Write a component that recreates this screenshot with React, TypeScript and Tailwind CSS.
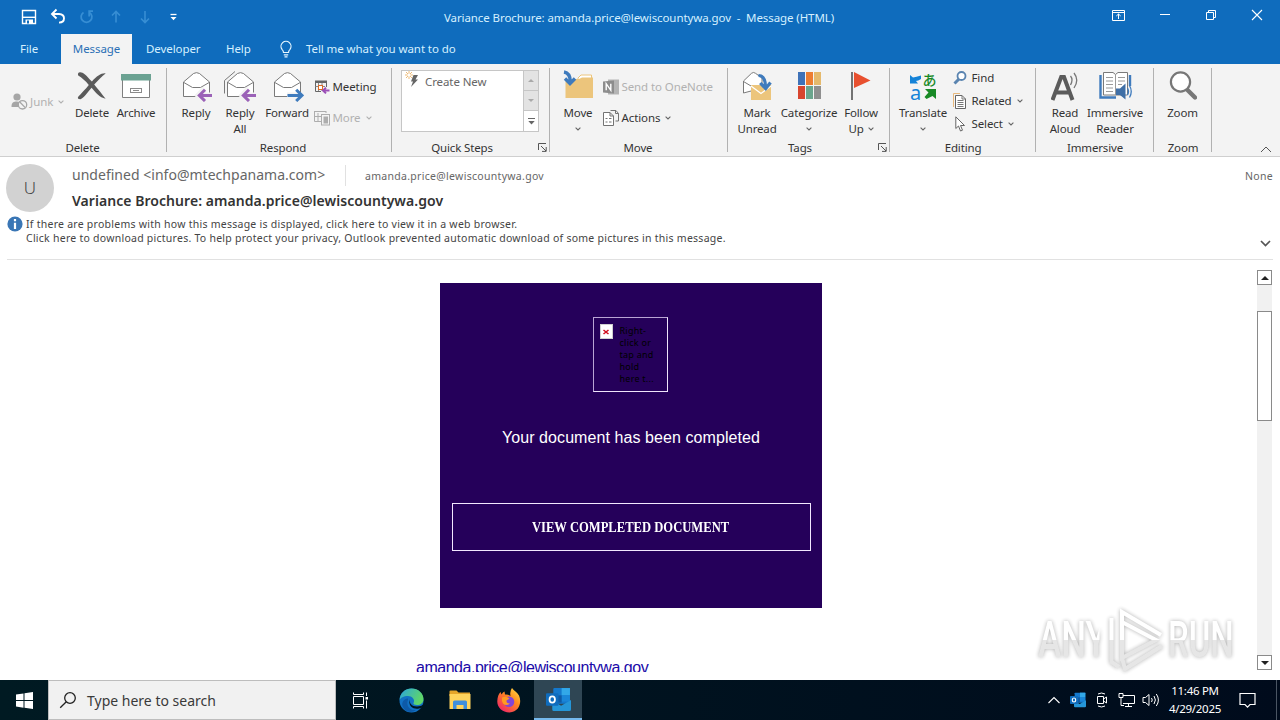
import type { ReactNode } from "react";
import clsx from "clsx";

function Caret({ className }: { className?: string }) {
  return (
    <svg width="6" height="4" viewBox="0 0 6 4" className={clsx("shrink-0", className)}>
      <path d="M0.6 0.6 3 2.9 5.4 0.6" fill="none" stroke="currentColor" strokeWidth="1.1" />
    </svg>
  );
}

function Group({
  label,
  className,
  labelClass,
  launcher,
  children,
}: {
  label: string;
  className: string;
  labelClass?: string;
  launcher?: boolean;
  children: ReactNode;
}) {
  return (
    <div className={clsx("relative flex h-[92px] shrink-0 flex-col", className)}>
      <div className="flex h-[76px] pt-[6px]">{children}</div>
      <div className={clsx("h-4 text-center text-[11.5px] leading-4 tracking-[-0.15px] whitespace-nowrap", labelClass)}>
        {label}
      </div>
      {launcher && (
        <svg width="9" height="9" viewBox="0 0 9 9" className="absolute right-[3px] bottom-[4px] text-[#555]">
          <path d="M0.5 7V0.5H8M3 3 8 8M8.2 4V8.4H4" fill="none" stroke="currentColor" />
        </svg>
      )}
      <div className="absolute top-1 right-0 h-[84px] w-px bg-[#b1b1b1]" />
    </div>
  );
}

function BigButton({
  icon,
  lines,
  className,
  caret,
}: {
  icon: ReactNode;
  lines: string[];
  className: string;
  caret?: "below" | "inline";
}) {
  return (
    <div className={clsx("flex shrink-0 flex-col items-center", className)}>
      <div className="flex h-[35px] items-start justify-center">{icon}</div>
      {lines.map((line, i) => (
        <div
          key={line}
          className="flex h-4 items-center gap-1 text-[11.5px] leading-4 tracking-[-0.15px] whitespace-nowrap"
        >
          {line}
          {caret === "inline" && i === lines.length - 1 && <Caret className="text-[#666]" />}
        </div>
      ))}
      {caret === "below" && <Caret className="mt-[6px] text-[#666]" />}
    </div>
  );
}

function SmallButton({
  icon,
  label,
  caret,
  disabled,
}: {
  icon: ReactNode;
  label: string;
  caret?: boolean;
  disabled?: boolean;
}) {
  return (
    <div
      className={clsx(
        "flex h-4 items-center text-[11.5px] leading-4 tracking-[-0.1px] whitespace-nowrap",
        disabled && "text-[#b1b1b1]"
      )}
    >
      <div className="w-[18.5px] shrink-0">{icon}</div>
      <span>{label}</span>
      {caret && <Caret className={clsx("ml-[5px]", disabled ? "text-[#b1b1b1]" : "text-[#666]")} />}
    </div>
  );
}

/* ---------- ribbon icons ---------- */

function JunkIcon() {
  return (
    <svg width="17" height="17" viewBox="0 0 17 17" className="shrink-0">
      <circle cx="6" cy="4" r="3.6" fill="#a6a6a6" />
      <path d="M0.5 13.5C0.5 9.5 2.5 8.5 6 8.5L8 9v5H0.5Z" fill="#a6a6a6" />
      <circle cx="11.5" cy="11.8" r="4.2" fill="#f3f3f3" stroke="#a6a6a6" strokeWidth="1.3" />
      <path d="m8.8 9 5.4 5.6" stroke="#a6a6a6" strokeWidth="1.3" />
    </svg>
  );
}

function DeleteIcon() {
  return (
    <svg width="30" height="30" viewBox="0 0 30 30">
      <path
        d="M3 2.2C6 2 9 5 14.9 11.6 20 6 24 3 28.6 3.4 25 6 21 10.5 17.2 14.5 21 19 24.5 23.5 28.6 28.8 22.5 27.5 18.5 22.5 14.6 17.8 10.5 22.5 7 28 3.5 29.3 .8 29.3 .3 28 1.4 26.6 4.5 23 8.4 19.2 11.8 14.9 8 10.5 5 8 1.2 5.6 .6 3.6 1.2 2.4 3 2.2Z"
        fill="#5b5b5b"
      />
    </svg>
  );
}

function ArchiveIcon() {
  return (
    <svg width="30" height="30" viewBox="0 0 30 30">
      <path d="M1.5 10V27.5H28.5V10" fill="#fff" stroke="#7f7f7f" />
      <rect x="0" y="4" width="30" height="6.5" fill="#6ba292" />
      <rect x="9.5" y="18.5" width="11" height="4" fill="#fff" stroke="#8a8a8a" />
      <path d="M12 20.5h6" stroke="#8a8a8a" />
    </svg>
  );
}

function Envelope({ all }: { all?: boolean }) {
  return (
    <>
      {all && <path d="M-2.5 23.5V10.5L8 1.5" fill="none" stroke="#7a7a7a" />}
      <path d="M0.5 12 10.5 3.5Q13.5 1.8 16.5 3.5L26.5 12V26.5H0.5Z" fill="#fff" stroke="#7a7a7a" />
      <path d="M0.5 12.3 9.5 17.5H17.5L26.5 12.3" fill="none" stroke="#7a7a7a" />
    </>
  );
}

function ReplyIcon({ all }: { all?: boolean }) {
  return (
    <svg width="33" height="32" viewBox="-3 0 33 32">
      <Envelope all={all} />
      <path d="M29 25.4H16M21.8 18.8 15.4 25.4 21.8 32" fill="none" stroke="#f3f3f3" strokeWidth="6" />
      <path d="M29 25.4H16.5M22 19.8 16.3 25.4 22 31" fill="none" stroke="#9b62b7" strokeWidth="3" />
    </svg>
  );
}

function ForwardIcon() {
  return (
    <svg width="33" height="32" viewBox="-3 0 33 32">
      <Envelope />
      <path d="M13 25.4H28" fill="none" stroke="#f3f3f3" strokeWidth="6" />
      <path d="M13.5 25.4H27M22.2 19.8 27.9 25.4 22.2 31" fill="none" stroke="#3f7bbd" strokeWidth="3" />
    </svg>
  );
}

function MeetingIcon() {
  return (
    <svg width="16" height="16" viewBox="0 0 16 16">
      <path d="M1.5 2.5H12.5V8M1.5 2V12.5H7" fill="none" stroke="#666" />
      <rect x="1" y="1.5" width="12" height="2.5" fill="#666" />
      <path d="M4.5 4v8M8 4v8M1.5 7.5H11" stroke="#8a8a8a" />
      <rect x="4.5" y="6.5" width="4" height="4" fill="#fff" stroke="#dd6a24" />
      <path d="M15.5 11.5H9.5M12 8.6 9 11.5 12 14.4" fill="none" stroke="#9b4fb7" strokeWidth="2" />
    </svg>
  );
}

function MoreIcon() {
  return (
    <svg width="16" height="16" viewBox="0 0 16 16" fill="none" stroke="#adadad">
      <path d="M0.5 1.5H12M0.5 1V11.5H7M4 3v8M0.5 6.5H7M12 1v2" />
      <rect x="7.5" y="4.5" width="8" height="10.5" fill="#f3f3f3" />
      <rect x="10" y="7" width="3.5" height="6" fill="#adadad" />
    </svg>
  );
}

function MoveIcon() {
  return (
    <svg width="32" height="32" viewBox="0 0 32 32">
      <path d="M16 8 19 5H29.5V10H16Z" fill="#fff" stroke="#ecc57c" />
      <path d="M3.5 9H17L20 7.5H31V28H3.5Z" fill="#ecc57c" />
      <path d="M2 1.5Q8.5 2.5 8.5 12" fill="none" stroke="#f3f3f3" strokeWidth="6" />
      <path d="M2 2Q8.3 3 8.3 12M3 8.5 8 13.5 13 8.5" fill="none" stroke="#3f7bbd" strokeWidth="3.4" />
    </svg>
  );
}

function OneNoteIcon() {
  return (
    <svg width="16" height="16" viewBox="0 0 16 16">
      <path d="M5 0.5h11v15H5z" fill="#b4b4b4" />
      <path d="M0 2.5 11 1.5V14.5L0 13.5Z" fill="#8d8d8d" />
      <path d="M3.2 11.3V4.7L7.8 11.3V4.7" fill="none" stroke="#fff" strokeWidth="1.4" />
    </svg>
  );
}

function ActionsIcon() {
  return (
    <svg width="16" height="16" viewBox="0 0 16 16" fill="none" stroke="#737373">
      <path d="M0.5 2.5H7L10.5 6V15.5H0.5ZM7 2.5V6H10.5" fill="#fff" />
      <path d="M2.5 8.5h2M6 8.5h2.5M2.5 12h2M6 12h2.5M7.5 0.5h5.5l2.5 3V11h-3M12.5 0.5v3h3" />
    </svg>
  );
}

function MarkUnreadIcon() {
  return (
    <svg width="30" height="31" viewBox="0 0 30 31">
      <path d="M1.5 11 9.5 3.3Q11.5 1.6 13.5 3.3L20 8V21H9L1.5 23Z" fill="#fff" stroke="#7a7a7a" />
      <path d="M1.5 11.5 9 16" fill="none" stroke="#7a7a7a" />
      <rect x="9" y="15" width="20" height="15" fill="#ecc57c" />
      <path d="M9 16 19 23.5 29 16" fill="none" stroke="#fff" strokeWidth="1.3" />
      <path d="M16.5 5.5Q23 5.5 23.5 16M18.2 13 23.7 18.6 28.5 12.5" fill="none" stroke="#3f7bbd" strokeWidth="3.2" />
    </svg>
  );
}

function CategorizeIcon() {
  return (
    <div className="mt-[2px] grid grid-cols-3 gap-px">
      <div className="h-[13px] w-[7px] bg-[#3f72b8]" />
      <div className="h-[13px] w-[7px] bg-[#ed7d31]" />
      <div className="h-[13px] w-[7px] bg-[#e5b96c]" />
      <div className="h-[13px] w-[7px] bg-[#d8452e]" />
      <div className="h-[13px] w-[7px] bg-[#6ba58d]" />
      <div className="h-[13px] w-[7px] bg-[#8f8f8f]" />
    </div>
  );
}

function FlagIcon() {
  return (
    <svg width="20" height="30" viewBox="0 0 20 30">
      <path d="M1 2V30" stroke="#737373" strokeWidth="2" />
      <path d="M3 2 19.5 10.5 3 18Z" fill="#e8502f" />
    </svg>
  );
}

function TranslateIcon() {
  return (
    <div className="flex w-[27px] justify-between">
      <div className="flex w-[12px] flex-col items-center">
        <svg width="11" height="12" viewBox="0 0 11 12" className="mt-[3px]">
          <path d="M0 2 3 4.5Q6 4.2 11 2.5V6Q8 8 6 8L8 10.5H0Z" fill="#1583d8" />
        </svg>
        <span className="-mt-[3px] text-[20px] leading-[22px] text-[#1583d8]">a</span>
      </div>
      <div className="flex w-[14px] flex-col items-center">
        <span className="-mt-px font-['Noto_Sans_CJK_JP',sans-serif] text-[14px] leading-[20px] font-medium text-[#188a26]">
          あ
        </span>
        <svg width="12" height="11" viewBox="0 0 12 11" className="-mt-px">
          <path d="M1 1H12V11L8.5 8 2.5 11 0.5 9 4.5 4.5Z" fill="#188a26" />
        </svg>
      </div>
    </div>
  );
}

function FindIcon() {
  return (
    <svg width="14" height="14" viewBox="0 0 14 14" fill="none" stroke="#5a84b0">
      <path d="M6 8 1.5 12.5" strokeWidth="3" />
      <circle cx="8.5" cy="5" r="4" fill="#fff" strokeWidth="1.8" />
    </svg>
  );
}

function RelatedIcon() {
  return (
    <svg width="14" height="16" viewBox="0 0 14 16" fill="none">
      <path d="M0.5 14V0.5H7" stroke="#e8b87c" />
      <path d="M2.5 2.5H9L12.5 6V15.5H2.5Z" fill="#fff" stroke="#666" />
      <path d="M9 2.5V6h3.5M4.5 7.5h6M4.5 9.5h6M4.5 11.5h6M4.5 13.5h6" stroke="#777" />
    </svg>
  );
}

function SelectIcon() {
  return (
    <svg width="14" height="16" viewBox="0 0 14 16">
      <path d="M2.8 0.8V12.5L5.5 10 7.5 15 9.5 14.2 7.5 9.5H11.5Z" fill="#fff" stroke="#666" />
    </svg>
  );
}

function ReadAloudIcon() {
  return (
    <svg width="28" height="32" viewBox="0 0 28 32" fill="none">
      <path d="M1.5 30 10.2 7H13L21.5 30M5 22.5H18" stroke="#5b5b5b" strokeWidth="4" />
      <path d="M19.5 6Q22.5 9.5 19.5 15M23 3Q28.5 10 23 18" stroke="#777" strokeWidth="1.3" />
    </svg>
  );
}

function ImmersiveReaderIcon() {
  return (
    <svg width="33" height="31" viewBox="0 0 33 31" fill="none">
      <path d="M1.5 5V27.5H17M31 5V16" stroke="#3f7bbd" strokeWidth="2.4" />
      <path d="M4.5 2.5H14L16.5 4.5 19 2.5H28.5V25H4.5Z" fill="#fff" stroke="#7a7a7a" />
      <path
        d="M16.5 4.5V25M7 7.5h7M7 11h7M7 14.5h7M7 18h7M7 21.5h7M19 7.5h7M19 11h7M19 14.5h4"
        stroke="#9a9a9a"
      />
      <path d="M17 18.5H21L26.5 13.5V29.5L21 25H17Z" fill="#3f6fa6" />
      <path d="M28.5 18Q30.5 21.5 28.5 25M30.5 15.5Q34 21.5 30.5 27.5" stroke="#3f7bbd" strokeWidth="1.3" />
    </svg>
  );
}

function ZoomIcon() {
  return (
    <svg width="28" height="30" viewBox="0 0 28 30">
      <path d="m17.5 19 8.5 8.5" stroke="#777" strokeWidth="4.4" strokeLinecap="round" />
      <circle cx="11.5" cy="12" r="9.6" fill="#fff" stroke="#777" strokeWidth="2.2" />
    </svg>
  );
}

function OutlookIcon({ size }: { size: number }) {
  return (
    <svg width={size} height={size} viewBox="0 0 24 24">
      <rect x="7" y="1" width="16" height="15" rx="1" fill="#1478cc" />
      <path d="M15 1h8v7h-8z" fill="#32a8e8" />
      <path d="M15 8h8v6h-8z" fill="#1a86d8" />
      <path d="M7 8h8v7H7z" fill="#0f5ba5" />
      <path d="M6 13 14.5 18 24 12.5V21.5Q24 23 22.5 23H7.5Q6 23 6 21.5Z" fill="#2596d8" />
      <rect x="0" y="6" width="12" height="12" rx="1" fill="#0f6cbd" />
      <ellipse cx="6" cy="12" rx="2.6" ry="3" fill="none" stroke="#fff" strokeWidth="1.7" />
    </svg>
  );
}

/* ---------- window chrome ---------- */

function TitleBar() {
  return (
    <div className="relative flex h-[34px] items-center text-white">
      <svg width="160" height="18" viewBox="0 0 160 18" fill="none" className="ml-[20px]">
        <path d="M2.5 2.5H15.5V15.5H2.5Z" stroke="#fff" strokeWidth="1.4" />
        <path d="M2 9.3H16" stroke="#fff" strokeWidth="1.4" />
        <path d="M5.5 11.5h7.5v4H5.5z" fill="#fff" />
        <path d="M7 12.5h2v3H7z" fill="#0f6cbd" />
        <path d="M36.5 1.5 32 6 36.5 10.5M32.3 6H39Q44 6.3 44 10.3 44 14.5 39 14.6" stroke="#fff" strokeWidth="1.9" />
        <path d="M63.5 4.4A5.4 5.4 0 1 0 69.5 4.4M69.2 8.5V3.2H73" stroke="#378ed4" strokeWidth="1.8" />
        <path d="M96 14.5V4M92 7.5 96 3.5 100 7.5" stroke="#378ed4" strokeWidth="1.6" />
        <path d="M125 3V14M121 10.5 125 14.5 129 10.5" stroke="#378ed4" strokeWidth="1.6" />
        <path d="M150.5 6.5h6" stroke="#fff" strokeWidth="1.3" />
        <path d="M150.5 9h6l-3 3.3z" fill="#fff" />
      </svg>
      <div className="ml-[264px] pt-[2px] text-[11.5px] tracking-[-0.09px] whitespace-pre text-[#d5f0ff]">
        Variance Brochure: amanda.price@lewiscountywa.gov  -  Message (HTML)
      </div>
      <svg width="156" height="16" viewBox="0 0 156 16" fill="none" stroke="#fff" className="absolute top-[7px] right-[13px]">
        <path d="M1.5 3.5H13.5V13.5H1.5ZM1.5 5.5H13.5M7.5 12V7M5.3 9 7.5 7 9.7 9" />
        <path d="M49 7.5h10" />
        <path d="M95.5 5.5h7v7h-7zM97.5 5.3V3.5h7v7h-1.8" />
        <path d="m141 3 10 10M151 3 141 13" strokeWidth="1.1" />
      </svg>
    </div>
  );
}

function TabBar() {
  return (
    <div className="flex h-[30px] items-center text-[11.5px] tracking-[-0.08px] text-[#d5f0ff]">
      <div className="w-[61px] pl-[20px]">File</div>
      <div className="flex h-full w-[71px] items-center justify-center bg-[#f3f3f3] text-[#2a6fb5]">Message</div>
      <div className="ml-[14px] w-[80px]">Developer</div>
      <div className="w-[53px]">Help</div>
      <svg width="14" height="18" viewBox="0 0 14 18" fill="none" stroke="#e6f6ff" strokeWidth="1.2">
        <path d="M4.5 12.5Q4.5 10.8 3 9.3A5 5 0 1 1 11 9.3Q9.5 10.8 9.5 12.5ZM4.8 14.8h4.4M5.5 16.8h3" />
      </svg>
      <div className="ml-[13px]">Tell me what you want to do</div>
    </div>
  );
}

function Ribbon() {
  return (
    <div className="relative flex h-[93px] border-b border-[#cfcfcf] bg-[#f3f3f3] text-[#333]">
      <Group label="Delete" className="w-[167px] pl-[11px]" labelClass="w-[143px]">
        <div className="flex w-[55px] items-center self-start pt-[23px] text-[11.5px] text-[#b1b1b1]">
          <JunkIcon />
          <span className="ml-[2px]">Junk</span>
          <Caret className="ml-1" />
        </div>
        <BigButton icon={<DeleteIcon />} lines={["Delete"]} className="w-[52px]" />
        <BigButton icon={<ArchiveIcon />} lines={["Archive"]} className="w-[36px]" />
      </Group>

      <Group label="Respond" className="w-[225px] pl-[7px]">
        <BigButton icon={<ReplyIcon />} lines={["Reply"]} className="w-[44px]" />
        <BigButton icon={<ReplyIcon all />} lines={["Reply", "All"]} className="w-[44px]" />
        <BigButton icon={<ForwardIcon />} lines={["Forward"]} className="w-[50px]" />
        <div className="ml-[2px] flex flex-col gap-[15px] pt-[9px]">
          <SmallButton icon={<MeetingIcon />} label="Meeting" />
          <SmallButton icon={<MoreIcon />} label="More" caret disabled />
        </div>
      </Group>

      <Group label="Quick Steps" className="w-[158px] pl-[9px]" labelClass="w-[122px]" launcher>
        <div className="flex h-[62px] w-[138px] border border-[#c6c6c6] bg-white">
          <svg width="17" height="20" viewBox="0 0 17 20" className="ml-[2px]">
            <path d="M5 0v8M1 4h8M2 1l6 6M8 1 2 7" stroke="#eebb77" />
            <circle cx="5" cy="4" r="1.5" fill="#fff" />
            <path d="M9.5 4H14L11.5 8.5H14L7 16 9 10.5H7Z" fill="#666" />
          </svg>
          <span className="ml-[4px] grow pt-[3px] text-[11.5px] leading-4 tracking-[-0.1px] text-[#666]">Create New</span>
          <div className="flex w-[15px] flex-col border-l border-[#c6c6c6]">
            <div className="flex h-[20px] items-center justify-center border-b border-[#c6c6c6] bg-[#e3e3e3]">
              <svg width="6" height="3" viewBox="0 0 6 3"><path d="M0 3 3 0 6 3Z" fill="#a9a9a9" /></svg>
            </div>
            <div className="flex h-[20px] items-center justify-center border-b border-[#c6c6c6] bg-[#e3e3e3]">
              <svg width="6" height="3" viewBox="0 0 6 3"><path d="M0 0 3 3 6 0Z" fill="#a9a9a9" /></svg>
            </div>
            <div className="flex h-[20px] items-center justify-center">
              <svg width="7" height="7" viewBox="0 0 7 7"><path d="M0 0.5H7" stroke="#666" /><path d="M0.3 3H6.7L3.5 6.5Z" fill="#666" /></svg>
            </div>
          </div>
        </div>
      </Group>

      <Group label="Move" className="w-[178px] pl-[3px]" labelClass="w-[170px]">
        <BigButton icon={<MoveIcon />} lines={["Move"]} className="w-[50px]" caret="below" />
        <div className="flex flex-col gap-[15px] pt-[9px]">
          <SmallButton icon={<OneNoteIcon />} label="Send to OneNote" disabled />
          <SmallButton icon={<ActionsIcon />} label="Actions" caret />
        </div>
      </Group>

      <Group label="Tags" className="w-[162px] pl-[4px]" labelClass="w-[136px]" launcher>
        <BigButton icon={<MarkUnreadIcon />} lines={["Mark", "Unread"]} className="w-[50px]" />
        <BigButton icon={<CategorizeIcon />} lines={["Categorize"]} className="w-[54px]" caret="below" />
        <BigButton icon={<FlagIcon />} lines={["Follow", "Up"]} className="w-[50px]" caret="inline" />
      </Group>

      <Group label="Editing" className="w-[146px]">
        <BigButton icon={<TranslateIcon />} lines={["Translate"]} className="ml-[3px] w-[60px]" caret="below" />
        <div className="flex flex-col gap-[7px]">
          <SmallButton icon={<FindIcon />} label="Find" />
          <SmallButton icon={<RelatedIcon />} label="Related" caret />
          <SmallButton icon={<SelectIcon />} label="Select" caret />
        </div>
      </Group>

      <Group label="Immersive" className="w-[118px]">
        <BigButton icon={<ReadAloudIcon />} lines={["Read", "Aloud"]} className="ml-[6px] w-[46px]" />
        <BigButton icon={<ImmersiveReaderIcon />} lines={["Immersive", "Reader"]} className="w-[54px]" />
      </Group>

      <Group label="Zoom" className="w-[58px]">
        <BigButton icon={<ZoomIcon />} lines={["Zoom"]} className="w-[57px]" />
      </Group>

      <svg width="12" height="7" viewBox="0 0 12 7" className="absolute right-[8px] bottom-[3px]">
        <path d="M1 6 6 1 11 6" fill="none" stroke="#555" />
      </svg>
    </div>
  );
}

/* ---------- message ---------- */

function MessageHeader() {
  return (
    <div className="mx-[7px] h-[103px] border-b border-[#e1e1e1] text-[#444]">
      <div className="flex h-[58px] pt-[7px]">
        <div className="-ml-px flex size-12 shrink-0 items-center justify-center rounded-full bg-[#d2d2d2] text-[17px] font-light text-[#444]">
          U
        </div>
        <div className="ml-[18px] grow">
          <div className="flex h-[23px] items-center text-[#666]">
            <div className="w-[273px] pb-[2px] text-[14px] tracking-[0.02px] whitespace-nowrap">
              undefined &lt;info@mtechpanama.com&gt;
            </div>
            <div className="h-[21px] w-px bg-[#e1e1e1]" />
            <div className="ml-[19px] pt-[2px] text-[10.5px] tracking-[0.3px]">amanda.price@lewiscountywa.gov</div>
            <div className="ml-auto pt-[2px] text-[10.5px] tracking-[0.3px]">None</div>
          </div>
          <div className="h-[28px] text-[14px] leading-[28px] font-semibold tracking-[0.05px] text-[#333]">
            Variance Brochure: amanda.price@lewiscountywa.gov
          </div>
        </div>
      </div>
      <div className="relative flex text-[10.5px] leading-[14px] tracking-[0.255px]">
        <svg width="16" height="16" viewBox="0 0 16 16" className="mt-px shrink-0">
          <circle cx="8" cy="8" r="7.6" fill="#3a76b5" />
          <path d="M8 3v2.3M8 6.7V13" stroke="#fff" strokeWidth="2.2" />
        </svg>
        <div className="ml-[3px] pt-[2px] whitespace-nowrap">
          <div>If there are problems with how this message is displayed, click here to view it in a web browser.</div>
          <div>Click here to download pictures. To help protect your privacy, Outlook prevented automatic download of some pictures in this message.</div>
        </div>
        <svg width="11" height="7" viewBox="0 0 11 7" className="absolute top-[25px] right-[2px]">
          <path d="M1 1 5.5 5.5 10 1" fill="none" stroke="#555" strokeWidth="1.7" />
        </svg>
      </div>
    </div>
  );
}

function ScrollBar() {
  return (
    <div className="flex h-[400px] w-[15px] shrink-0 flex-col bg-[#f1f1f1]">
      <div className="flex h-[15px] items-center justify-center border border-[#8a8a8a] bg-white">
        <svg width="8" height="4" viewBox="0 0 8 4"><path d="M0 4 4 0 8 4Z" fill="#222" /></svg>
      </div>
      <div className="mt-[26px] h-[110px] border border-[#8a8a8a] bg-white" />
      <div className="mt-auto flex h-[15px] items-center justify-center border border-[#8a8a8a] bg-white">
        <svg width="8" height="4" viewBox="0 0 8 4"><path d="M0 0 4 4 8 0Z" fill="#222" /></svg>
      </div>
    </div>
  );
}

function MessageBody() {
  return (
    <div className="flex h-[420px] pt-[10px] pr-[8px]">
      <div className="h-[402px] grow overflow-hidden pt-[13px]">
        <div className="ml-[440px] flex h-[325px] w-[382px] flex-col items-center bg-[#25005a] text-white">
          <div className="mt-[34px] mr-[2px] flex h-[75px] w-[75px] border border-[#efe4fa] border-t-[#b9a4d4] border-l-[#b9a4d4] pt-[6px] pl-[6px]">
            <div className="flex h-[15px] w-[13px] shrink-0 items-center justify-center border border-[#cfcfcf] bg-white">
              <svg width="6" height="6" viewBox="0 0 6 6"><path d="m0.5 1 5 4M5.5 1l-5 4" stroke="#d01020" strokeWidth="1.6" /></svg>
            </div>
            <div className="ml-[7px] pt-px text-[9px] leading-[12px] tracking-[0.25px] whitespace-nowrap text-black">
              <div>Right-</div>
              <div>click or</div>
              <div>tap and</div>
              <div>hold</div>
              <div>here t...</div>
            </div>
          </div>
          <div className="mt-[34px] h-[24px] font-['Liberation_Sans',sans-serif] text-[16px] leading-[24px] tracking-[0.08px] whitespace-nowrap">
            Your document has been completed
          </div>
          <div className="mt-[53px] flex h-[48px] w-[359px] items-center justify-center border border-[#f3e8ff] font-['Liberation_Serif',serif] text-[14px] font-bold">
            <span className="scale-x-90">VIEW COMPLETED DOCUMENT</span>
          </div>
        </div>
        <div className="mt-[50px] ml-[416px] h-[20px] font-['Liberation_Sans',sans-serif] text-[16px] leading-[20px] tracking-[-0.48px] text-[#1a0aa8]">
          amanda.price@lewiscountywa.gov
        </div>
      </div>
      <ScrollBar />
    </div>
  );
}

function Watermark() {
  return (
    <div className="absolute top-[606px] left-[1038px] flex h-[68px] w-[200px] items-center text-white opacity-90 drop-shadow-[0_0_2px_rgba(0,0,0,0.35)]">
      <div className="w-[67px]">
        <div className="w-[88px] origin-left scale-x-[0.7] bg-linear-to-b from-white from-50% to-[#e4e4e4] to-50% bg-clip-text font-['Roboto',sans-serif] text-[50px] leading-[68px] font-medium text-transparent">
          ANY
        </div>
      </div>
      <svg width="60" height="64" viewBox="0 0 60 64" fill="none" stroke="#fff" strokeWidth="4" className="shrink-0">
        <defs>
          <linearGradient id="mark" gradientUnits="userSpaceOnUse" x1="0" y1="0" x2="0" y2="64">
            <stop offset="0.5" stopColor="#fff" />
            <stop offset="0.5" stopColor="#e4e4e4" />
          </linearGradient>
        </defs>
        <path d="M17 14V50L51 32Z" stroke="url(#mark)" />
        <path d="M6.5 10V54L14 59M17 14V4L56 27M17 50 20 61 57 38" stroke="url(#mark)" />
      </svg>
      <div className="ml-[3px] w-[68px]">
        <div className="w-[100px] origin-left scale-x-[0.66] bg-linear-to-b from-white from-50% to-[#e4e4e4] to-50% bg-clip-text font-['Roboto',sans-serif] text-[50px] leading-[68px] font-medium text-transparent">
          RUN
        </div>
      </div>
    </div>
  );
}

/* ---------- taskbar ---------- */

function EdgeIcon() {
  return (
    <svg width="25" height="25" viewBox="0 0 25 25">
      <defs>
        <linearGradient id="edge-top" x1="0" y1="0" x2="1" y2="0.4">
          <stop offset="0" stopColor="#2ba6dd" />
          <stop offset="1" stopColor="#5fd668" />
        </linearGradient>
      </defs>
      <circle cx="12.5" cy="12.5" r="12" fill="#1272c4" />
      <path d="M0.6 12C1 5 6 0.5 12.5 0.5 19.5 0.5 24.5 5.5 24.5 11 24.5 15 21.5 17 18 17 15.5 17 14 16 14.5 15 16.5 11.5 13 8 9 8 4.5 8 1.5 10 0.6 12Z" fill="url(#edge-top)" />
      <path d="M9 12C7 16 9.5 23 17 22 13 25.5 5 24.5 3.2 17 3 13 6 10.5 9 10.5Z" fill="#0d5aa8" />
      <path d="M11 11.5C10 15 12.5 18.5 18 18.5 20.5 18.5 22.5 17.8 24 16.8L25 19 20 20.5C17 21 14 20.5 12 18.5 10 16 10 13.5 11 11.5Z" fill="#001520" />
    </svg>
  );
}

function ExplorerIcon() {
  return (
    <svg width="22" height="20" viewBox="0 0 22 20">
      <path d="M0.5 1.5Q0.5 0.5 1.5 0.5H7.5L9.5 2.5H21V6H0.5Z" fill="#e5a52a" />
      <path d="M0.5 4H21.5V19H0.5Z" fill="#ffd35c" />
      <path d="M4 19V12Q4 10.5 5.5 10.5H16.5Q18 10.5 18 12V19H14.5V15H7.5V19Z" fill="#3f8fdd" />
    </svg>
  );
}

function FirefoxIcon() {
  return (
    <svg width="24" height="25" viewBox="0 0 24 25">
      <defs>
        <linearGradient id="ff" x1="1" y1="0" x2="0.2" y2="1">
          <stop offset="0" stopColor="#ffe44a" />
          <stop offset="0.45" stopColor="#ff8a1e" />
          <stop offset="1" stopColor="#f0206a" />
        </linearGradient>
      </defs>
      <path d="M15 0C17 3 20 4 22 7.5 25 14 22.5 24 12.5 24.5 5 24.5 0 19 0.3 13 0.5 9 1.5 6 3.5 4L4.5 6.5Q6 4 7.5 3.5L8 6.5Q11 6 13.5 8 12.5 3 15 0Z" fill="url(#ff)" />
      <circle cx="12" cy="13.8" r="5.3" fill="#8145d8" />
      <path d="M5 9.5Q9 7.5 12.5 10.5L9.5 12.5Q9 15.5 13 15.5 9 18.5 6 15.5 4.5 12.5 5 9.5Z" fill="#ff9b20" />
    </svg>
  );
}

function Taskbar() {
  return (
    <div className="flex h-[40px] items-center bg-linear-to-r from-[#001a22] to-[#000b1c] text-white">
      <div className="flex w-[48px] justify-center">
        <svg width="17" height="17" viewBox="0 0 17 17" fill="#fff">
          <path d="M0 2.6 7.5 1.4V8H0ZM8.5 1.3 17 0V8H8.5ZM0 9H7.5V15.7L0 14.6ZM8.5 9H17V17L8.5 15.8Z" />
        </svg>
      </div>
      <div className="flex h-full w-[288px] items-center border border-[#bdbdbd] bg-[#f1f1f1] text-[#3a3a3a]">
        <svg width="18" height="18" viewBox="0 0 18 18" fill="none" stroke="#222" strokeWidth="1.3" className="ml-[10px]">
          <circle cx="11" cy="7" r="5.3" />
          <path d="M7.3 10.8 1.2 16.8" />
        </svg>
        <span className="ml-[10px] text-[14px]">Type here to search</span>
      </div>
      <div className="flex w-[48px] justify-center">
        <svg width="17" height="17" viewBox="0 0 17 17" fill="none" stroke="#fff">
          <path d="M1.5 4.5h10v8h-10zM1.5 0.5V2.5H11.5V0.5M1.5 16.5V14.5H11.5V16.5M14.5 0.5V4M14.5 8.5V16.5" />
          <path d="M13.5 5h2.5v2.5h-2.5z" fill="#fff" stroke="none" />
        </svg>
      </div>
      <div className="flex w-[54px] justify-center"><EdgeIcon /></div>
      <div className="flex w-[44px] justify-center"><ExplorerIcon /></div>
      <div className="flex w-[52px] justify-center pl-[2px]"><FirefoxIcon /></div>
      <div className="flex h-full w-[48px] items-center justify-center border-b-2 border-[#76b9ed] bg-[#2f4654]">
        <OutlookIcon size={25} />
      </div>
      <div className="ml-auto flex h-full items-center">
        <svg width="14" height="8" viewBox="0 0 14 8" className="mr-[9px]">
          <path d="M1.5 7 7 1.5 12.5 7" fill="none" stroke="#fff" strokeWidth="1.1" />
        </svg>
        <OutlookIcon size={16} />
        <svg width="16" height="16" viewBox="0 0 16 16" fill="none" stroke="#fff" className="ml-[8px]">
          <path d="M3.5 4.5h6v7h-6zM9.5 7 12.5 5V11L9.5 9M4 2Q7.5 0 11 2M4 14Q7.5 16 11 14" />
        </svg>
        <svg width="17" height="16" viewBox="0 0 17 16" fill="none" stroke="#fff" className="ml-[8px]">
          <path d="M5 3.5H16.5V11.5H5M1 1.5H5V5.5H1ZM3 5.5V13.5H6M10.5 11.5V14M7 14.5h7" />
        </svg>
        <svg width="18" height="16" viewBox="0 0 18 16" fill="none" stroke="#fff" className="ml-[7px]">
          <path d="M1 5.5H3.5L7 2.5V13.5L3.5 10.5H1ZM9.5 6Q11 8 9.5 10M12 4Q14.8 8 12 12M14.3 2Q18.5 8 14.3 14" />
        </svg>
        <div className="ml-[7px] w-[56px] text-center text-[11.5px] leading-[18px] tracking-[-0.3px] whitespace-nowrap">
          <div>11:46 PM</div>
          <div>4/29/2025</div>
        </div>
        <svg width="17" height="17" viewBox="0 0 17 17" fill="none" stroke="#fff" strokeWidth="1.2" className="ml-[16px]">
          <path d="M1 1.5H16V12.5H11L8.5 15.2 6 12.5H1Z" />
        </svg>
        <div className="ml-[20px] h-full w-[4px] border-l border-[#4a5563]" />
      </div>
    </div>
  );
}

export default function App() {
  return (
    <div className="relative h-[720px] w-[1280px] overflow-hidden bg-white font-['Noto_Sans','Open_Sans',sans-serif]">
      <div className="bg-[#0f6cbd]">
        <TitleBar />
        <TabBar />
      </div>
      <Ribbon />
      <MessageHeader />
      <MessageBody />
      <Taskbar />
      <Watermark />
    </div>
  );
}
